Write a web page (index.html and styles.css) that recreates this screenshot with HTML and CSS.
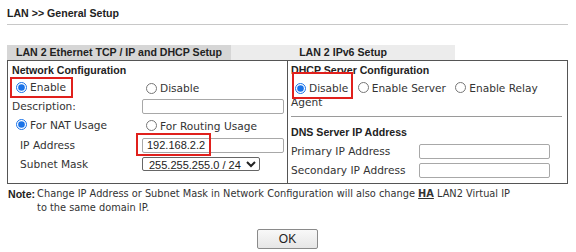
FILE: index.html
```html
<!DOCTYPE html>
<html lang="en">
<head>
    <meta charset="UTF-8">
    <title>LAN General Setup</title>
    <link rel="stylesheet" href="styles.css">
</head>
<body>
    <div class="page">
        <h1 class="title">LAN &gt;&gt; General Setup</h1>

        <!-- Tabs -->
        <div class="tabs">
            <div class="tab active">LAN 2 Ethernet TCP / IP and DHCP Setup</div>
            <div class="tab">LAN 2 IPv6 Setup</div>
        </div>

        <div class="panel">
            <!-- Network Configuration -->
            <div class="col left">
                <div class="row head">Network Configuration</div>
                <div class="row">
                    <div class="cell">
                        <label class="radio marked mark-enable"><input type="radio" name="net" checked>Enable</label>
                    </div>
                    <label class="radio"><input type="radio" name="net">Disable</label>
                </div>
                <div class="row">
                    <span class="cell">Description:</span>
                    <input type="text" class="field wide">
                </div>
                <div class="row tall">
                    <div class="cell">
                        <label class="radio"><input type="radio" name="usage" checked>For NAT Usage</label>
                    </div>
                    <label class="radio"><input type="radio" name="usage">For Routing Usage</label>
                </div>
                <div class="row">
                    <span class="cell sub">IP Address</span>
                    <span class="marked mark-ip"><input type="text" class="field wide" value="192.168.2.2"></span>
                </div>
                <div class="row last">
                    <span class="cell sub">Subnet Mask</span>
                    <select class="field select">
                        <option>255.255.255.0 / 24</option>
                    </select>
                </div>
            </div>

            <!-- DHCP Server Configuration -->
            <div class="col right">
                <div class="row head">DHCP Server Configuration</div>
                <div class="radios">
                    <label class="radio marked mark-disable"><input type="radio" name="dhcp" checked>Disable</label>
                    <label class="radio"><input type="radio" name="dhcp">Enable Server</label>
                    <label class="radio"><input type="radio" name="dhcp">Enable Relay Agent</label>
                </div>
                <hr class="divider">
                <div class="row head dns-head">DNS Server IP Address</div>
                <div class="row">
                    <span class="dns-label">Primary IP Address</span>
                    <input type="text" class="field dns">
                </div>
                <div class="row">
                    <span class="dns-label">Secondary IP Address</span>
                    <input type="text" class="field dns">
                </div>
            </div>
        </div>

        <p class="note"><b>Note:</b><span>Change IP Address or Subnet Mask in Network Configuration will also change <u>HA</u> LAN2 Virtual IP to the same domain IP.</span></p>

        <div class="actions">
            <button type="button" class="ok-btn">OK</button>
        </div>
    </div>
</body>
</html>
```

FILE: styles.css
```css
body {
    margin: 0;
    background: #ffffff;
    color: #333;
    font-family: 'DejaVu Sans', Verdana, sans-serif;
    font-size: 10.6px;
}

.page {
    padding: 0 8px 0 7px;
}

.title {
    margin: 0;
    padding: 6px 0 4px;
    font-family: 'Liberation Sans', Arial, sans-serif;
    font-size: 10.6px;
    line-height: 14px;
    font-weight: bold;
    color: #222;
    border-bottom: 1px solid #c8c8c8;
}

.tabs {
    display: flex;
    margin-top: 20px;
}

.tab {
    width: 224px;
    height: 15px;
    line-height: 15px;
    text-align: center;
    font-family: 'Liberation Sans', Arial, sans-serif;
    font-weight: bold;
    font-size: 10.6px;
    color: #222;
    background: #ececec;
}

.tab.active {
    background: #d6d6d6;
}

.panel {
    display: grid;
    grid-template-columns: 279px 1fr;
    border: 1px solid #555;
}

.col.right {
    border-left: 1px solid #555;
    padding: 0 5px 4px 3px;
}

.col.left {
    padding-left: 4px;
}

.row {
    display: flex;
    align-items: center;
    height: 18px;
}

.row.tall {
    height: 21px;
}

.row.last {
    height: 20px;
}

.head {
    font-family: 'Liberation Sans', Arial, sans-serif;
    font-weight: bold;
    color: #222;
}

.cell {
    width: 130px;
    flex-shrink: 0;
}

.sub {
    padding-left: 8px;
    width: 122px;
}

.radio {
    display: inline-flex;
    align-items: center;
    margin-left: 4px;
}

.radio input {
    width: 11px;
    height: 11px;
    margin: 0 3px 0 0;
    accent-color: #1a73e8;
}

.field {
    box-sizing: border-box;
    height: 15px;
    border: 1px solid #a8a8a8;
    border-radius: 2px;
    padding: 0 4px;
    font-family: 'Liberation Sans', Arial, sans-serif;
    font-size: 11px;
    color: #222;
    background: #fff;
}

.wide {
    width: 142px;
}

.select {
    width: 118px;
    height: 14px;
    padding: 0 0 0 2px;
    border-color: #666;
}

.radios {
    margin-top: 2px;
    line-height: 14px;
    width: 262px;
}

.radios .radio {
    display: inline;
    margin-right: 2px;
}

.radios .radio input {
    vertical-align: -1px;
}

.radios .mark-disable {
    display: inline-flex;
    height: 14px;
    vertical-align: top;
}

.divider {
    margin: 7px 0 0;
    border: none;
    border-top: 1px solid #9a9a9a;
}

.dns-head {
    margin-top: 6px;
}

.dns-label {
    width: 128px;
    flex-shrink: 0;
}

.dns {
    width: 131px;
}

.col.right .row + .row {
    margin-top: 1px;
}

.marked {
    position: relative;
}

.marked::after {
    content: "";
    position: absolute;
    border: 2px solid #e0201c;
    pointer-events: none;
}

.mark-enable::after {
    left: -6px;
    right: -7px;
    top: -4px;
    bottom: -5px;
}

.mark-disable::after {
    left: -3px;
    right: -5px;
    top: -9px;
    bottom: -4px;
}

.mark-ip::after {
    left: -6px;
    width: 71px;
    top: -5px;
    bottom: -3px;
}

.note {
    display: flex;
    width: 505px;
    margin: 3px 0 0 1px;
    line-height: 14px;
    font-size: 9.8px;
    color: #333;
}

.note b {
    font-family: 'Liberation Sans', Arial, sans-serif;
    font-size: 10.6px;
    color: #222;
    margin-right: 2px;
    flex-shrink: 0;
}

.note u {
    font-weight: bold;
}

.actions {
    display: flex;
    justify-content: center;
    margin-top: 14px;
}

.ok-btn {
    width: 61px;
    height: 20px;
    border: 1px solid #8a8a8a;
    border-radius: 2px;
    background: linear-gradient(#f8f8f8, #e6e6e6);
    font-family: 'Liberation Sans', Arial, sans-serif;
    font-size: 12px;
    color: #222;
}
```
